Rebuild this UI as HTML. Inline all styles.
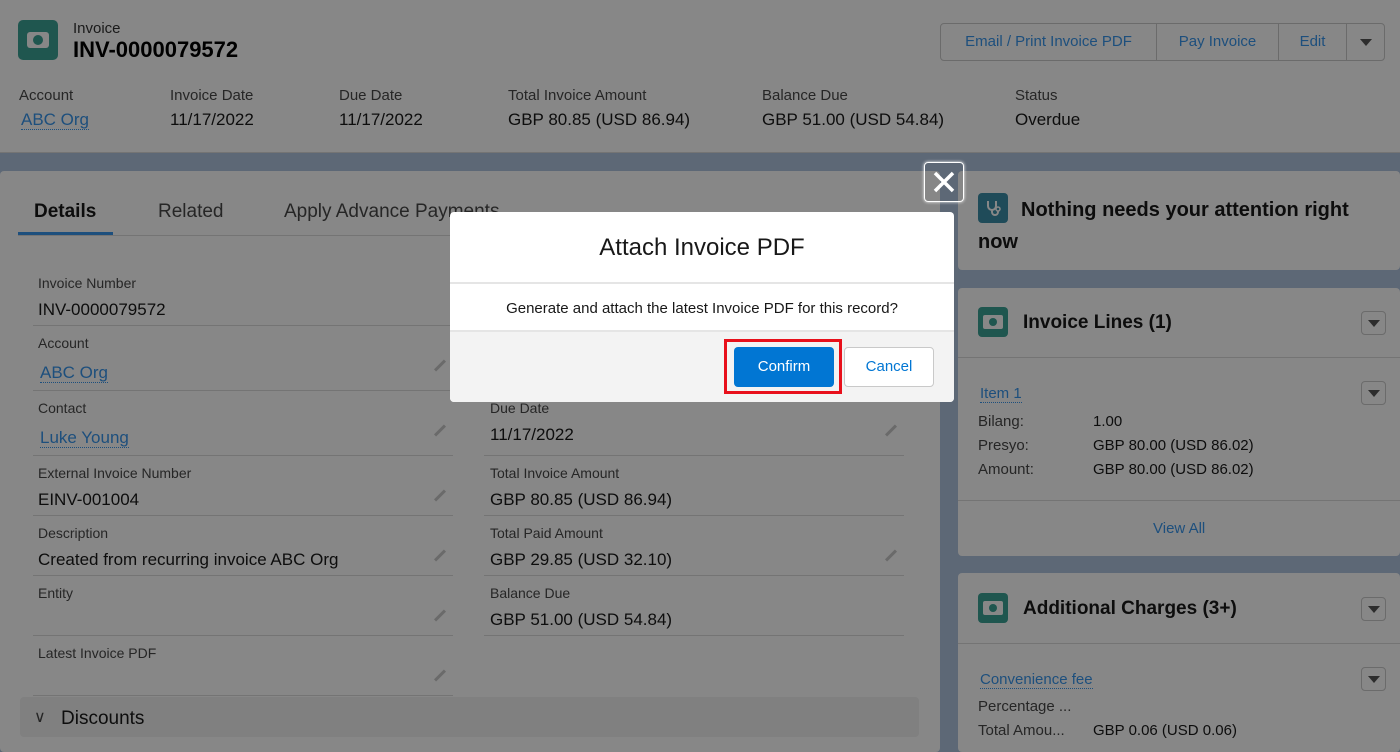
<!DOCTYPE html>
<html style="width:1400px;height:752px;overflow:hidden"><head><meta charset="utf-8"><style>
*{box-sizing:border-box;margin:0;padding:0}
body{width:1400px;height:752px;overflow:hidden;position:relative;font-family:"Liberation Sans",sans-serif;background:#5d6876;color:#0d0d0d}
.a{position:absolute}
.lbl{font-size:14px;color:#262626;white-space:nowrap}
.val{font-size:17px;color:#0d0d0d;white-space:nowrap}
.lnk{color:#1d4f7d;border-bottom:1px dotted #1d4f7d}
.line{position:absolute;height:1px;background:#747474}
.pen{position:absolute;width:14px;height:3px;background:#6a6a6a;transform:rotate(-45deg)}
.card{position:absolute;background:#878787;border-radius:4px}
.dd{position:absolute;width:25px;height:24px;border:1px solid #6b6b6b;border-radius:4px;background:#878787}
.dd::after{content:"";position:absolute;left:6px;top:8px;border-left:6px solid transparent;border-right:6px solid transparent;border-top:7px solid #2d2d2d}
.ic{position:absolute;width:30px;height:30px;border-radius:4px;background:#1f564f}
.ic i{position:absolute;left:5px;top:8px;width:20px;height:14px;background:#878787;border-radius:2px}
.ic b{position:absolute;left:11px;top:11px;width:8px;height:8px;background:#1f564f;border-radius:50%}
</style></head><body>
<!-- header -->
<div class="a" style="left:0;top:0;width:1400px;height:153px;background:#878787;border-bottom:1px solid #747474"></div>
<div class="a" style="left:18px;top:20px;width:40px;height:40px;border-radius:5px;background:#1f564f"><div style="position:absolute;left:9px;top:12px;width:22px;height:16px;background:#878787;border-radius:3px"></div><div style="position:absolute;left:15px;top:15px;width:10px;height:10px;background:#1f564f;border-radius:50%"></div></div>
<div class="a" style="left:73px;top:20px;font-size:15px;color:#1a1a1a">Invoice</div>
<div class="a" style="left:73px;top:37px;font-size:22px;font-weight:bold;color:#000">INV-0000079572</div>
<div class="a" style="left:940px;top:23px;width:445px;height:38px;border:1px solid #6b6b6b;border-radius:4px;background:#878787;font-size:15px;color:#1d4f7d">
<div class="a" style="left:0;width:215px;height:36px;line-height:36px;text-align:center">Email / Print Invoice PDF</div>
<div class="a" style="left:215px;width:122px;height:36px;line-height:36px;text-align:center;border-left:1px solid #6b6b6b">Pay Invoice</div>
<div class="a" style="left:337px;width:68px;height:36px;line-height:36px;text-align:center;border-left:1px solid #6b6b6b">Edit</div>
<div class="a" style="left:405px;width:38px;height:36px;border-left:1px solid #6b6b6b"><div style="position:absolute;left:13px;top:15px;border-left:6px solid transparent;border-right:6px solid transparent;border-top:7px solid #2d2d2d"></div></div>
</div>
<div class="a lbl" style="left:19px;top:87px;font-size:15px">Account</div>
<div class="a val" style="left:21px;top:110px"><span class="lnk">ABC Org</span></div>
<div class="a lbl" style="left:170px;top:87px;font-size:15px">Invoice Date</div>
<div class="a val" style="left:170px;top:110px">11/17/2022</div>
<div class="a lbl" style="left:339px;top:87px;font-size:15px">Due Date</div>
<div class="a val" style="left:339px;top:110px">11/17/2022</div>
<div class="a lbl" style="left:508px;top:87px;font-size:15px">Total Invoice Amount</div>
<div class="a val" style="left:508px;top:110px">GBP 80.85 (USD 86.94)</div>
<div class="a lbl" style="left:762px;top:87px;font-size:15px">Balance Due</div>
<div class="a val" style="left:762px;top:110px">GBP 51.00 (USD 54.84)</div>
<div class="a lbl" style="left:1015px;top:87px;font-size:15px">Status</div>
<div class="a val" style="left:1015px;top:110px">Overdue</div>

<!-- left card -->
<div class="card" style="left:0;top:171px;width:940px;height:581px"></div>
<div class="a" style="left:34px;top:201px;font-size:19px;font-weight:bold">Details</div>
<div class="a" style="left:158px;top:201px;font-size:19px;color:#262626">Related</div>
<div class="a" style="left:284px;top:201px;font-size:19px;color:#262626">Apply Advance Payments</div>
<div class="line" style="left:18px;top:235px;width:890px"></div>
<div class="a" style="left:18px;top:232px;width:95px;height:3px;background:#1d4f7d"></div>

<div class="a lbl" style="left:38px;top:275px">Invoice Number</div>
<div class="a val" style="left:38px;top:300px">INV-0000079572</div>
<div class="line" style="left:33px;top:325px;width:420px"></div>
<div class="a lbl" style="left:38px;top:335px">Account</div>
<div class="a val" style="left:40px;top:363px"><span class="lnk">ABC Org</span></div>
<div class="pen" style="left:433px;top:364px"></div>
<div class="line" style="left:33px;top:390px;width:420px"></div>
<div class="a lbl" style="left:38px;top:400px">Contact</div>
<div class="a val" style="left:40px;top:428px"><span class="lnk">Luke Young</span></div>
<div class="pen" style="left:433px;top:429px"></div>
<div class="line" style="left:33px;top:455px;width:420px"></div>
<div class="a lbl" style="left:38px;top:465px">External Invoice Number</div>
<div class="a val" style="left:38px;top:490px">EINV-001004</div>
<div class="pen" style="left:433px;top:494px"></div>
<div class="line" style="left:33px;top:515px;width:420px"></div>
<div class="a lbl" style="left:38px;top:525px">Description</div>
<div class="a val" style="left:38px;top:550px">Created from recurring invoice ABC Org</div>
<div class="pen" style="left:433px;top:554px"></div>
<div class="line" style="left:33px;top:575px;width:420px"></div>
<div class="a lbl" style="left:38px;top:585px">Entity</div>
<div class="pen" style="left:433px;top:614px"></div>
<div class="line" style="left:33px;top:635px;width:420px"></div>
<div class="a lbl" style="left:38px;top:645px">Latest Invoice PDF</div>
<div class="pen" style="left:433px;top:674px"></div>
<div class="line" style="left:33px;top:695px;width:420px"></div>

<div class="a lbl" style="left:490px;top:400px">Due Date</div>
<div class="a val" style="left:490px;top:425px">11/17/2022</div>
<div class="pen" style="left:884px;top:429px"></div>
<div class="line" style="left:484px;top:455px;width:420px"></div>
<div class="a lbl" style="left:490px;top:465px">Total Invoice Amount</div>
<div class="a val" style="left:490px;top:490px">GBP 80.85 (USD 86.94)</div>
<div class="line" style="left:484px;top:515px;width:420px"></div>
<div class="a lbl" style="left:490px;top:525px">Total Paid Amount</div>
<div class="a val" style="left:490px;top:550px">GBP 29.85 (USD 32.10)</div>
<div class="pen" style="left:884px;top:554px"></div>
<div class="line" style="left:484px;top:575px;width:420px"></div>
<div class="a lbl" style="left:490px;top:585px">Balance Due</div>
<div class="a val" style="left:490px;top:610px">GBP 51.00 (USD 54.84)</div>
<div class="line" style="left:484px;top:635px;width:420px"></div>

<div class="a" style="left:20px;top:697px;width:899px;height:40px;background:#808080;border-radius:4px"></div>
<div class="a" style="left:34px;top:707px;font-size:16px;color:#262626">&#8744;</div>
<div class="a" style="left:61px;top:708px;font-size:19px">Discounts</div>

<!-- right column -->
<div class="card" style="left:958px;top:171px;width:442px;height:99px"></div>
<div class="a" style="left:978px;top:193px;width:30px;height:30px;border-radius:4px;background:#1f4b59"></div>
<svg class="a" style="left:978px;top:193px" width="30" height="30"><path d="M10 8v5a4 4 0 0 0 8 0V8M14 17v2a3 3 0 0 0 6 0v-1" stroke="#878787" stroke-width="2" fill="none"/><circle cx="20" cy="16" r="2" stroke="#878787" stroke-width="1.5" fill="none"/></svg>
<div class="a" style="left:978px;top:194px;width:400px;font-size:20px;font-weight:bold;line-height:32px;text-indent:43px">Nothing needs your attention right now</div>

<div class="card" style="left:958px;top:288px;width:442px;height:268px"></div>
<div class="ic" style="left:978px;top:307px"><i></i><b></b></div>
<div class="a" style="left:1023px;top:312px;font-size:19px;font-weight:bold">Invoice Lines (1)</div>
<div class="dd" style="left:1361px;top:311px"></div>
<div class="line" style="left:958px;top:357px;width:442px"></div>
<div class="a" style="left:980px;top:385px;font-size:15px"><span class="lnk">Item 1</span></div>
<div class="dd" style="left:1361px;top:381px"></div>
<div class="a" style="left:978px;top:410px;font-size:15px;color:#262626;line-height:24px">Bilang:<br>Presyo:<br>Amount:</div>
<div class="a" style="left:1093px;top:410px;font-size:15px;color:#0d0d0d;line-height:24px">1.00<br>GBP 80.00 (USD 86.02)<br>GBP 80.00 (USD 86.02)</div>
<div class="line" style="left:958px;top:500px;width:442px"></div>
<div class="a" style="left:1153px;top:520px;font-size:15px;color:#1d4f7d">View All</div>

<div class="card" style="left:958px;top:573px;width:442px;height:179px"></div>
<div class="ic" style="left:978px;top:593px"><i></i><b></b></div>
<div class="a" style="left:1023px;top:598px;font-size:19px;font-weight:bold">Additional Charges (3+)</div>
<div class="dd" style="left:1361px;top:597px"></div>
<div class="line" style="left:958px;top:643px;width:442px"></div>
<div class="a" style="left:980px;top:671px;font-size:15px"><span class="lnk">Convenience fee</span></div>
<div class="dd" style="left:1361px;top:667px"></div>
<div class="a" style="left:978px;top:695px;font-size:15px;color:#262626;line-height:24px">Percentage ...<br>Total Amou...</div>
<div class="a" style="left:1093px;top:719px;font-size:15px;color:#0d0d0d;line-height:24px">GBP 0.06 (USD 0.06)</div>

<!-- close -->
<div class="a" style="left:924px;top:162px;width:40px;height:40px;border:1px solid #fff;border-radius:4px;box-shadow:0 0 3px #fff"></div>
<svg class="a" style="left:924px;top:162px" width="40" height="40"><path d="M11 11L29 29M29 11L11 29" stroke="#fff" stroke-width="3.5"/></svg>

<!-- modal -->
<div class="a" style="left:450px;top:212px;width:504px;height:190px;background:#fff;border-radius:4px;overflow:hidden">
<div class="a" style="left:0;top:0;width:504px;height:72px;border-bottom:2px solid #e5e5e5;text-align:center;font-size:24px;line-height:72px;color:#181818">Attach Invoice PDF</div>
<div class="a" style="left:0;top:74px;width:504px;height:45px;text-align:center;font-size:15px;line-height:45px;color:#181818">Generate and attach the latest Invoice PDF for this record?</div>
<div class="a" style="left:0;top:118px;width:504px;height:72px;background:#f3f3f3;border-top:2px solid #e5e5e5"></div>
<div class="a" style="left:274px;top:127px;width:118px;height:55px;border:3px solid #e8101b"></div>
<div class="a" style="left:284px;top:135px;width:100px;height:40px;background:#0176d3;border-radius:4px;color:#fff;font-size:15px;line-height:40px;text-align:center">Confirm</div>
<div class="a" style="left:394px;top:135px;width:90px;height:40px;background:#fff;border:1px solid #c9c9c9;border-radius:4px;color:#0176d3;font-size:15px;line-height:38px;text-align:center">Cancel</div>
</div>
</body></html>
